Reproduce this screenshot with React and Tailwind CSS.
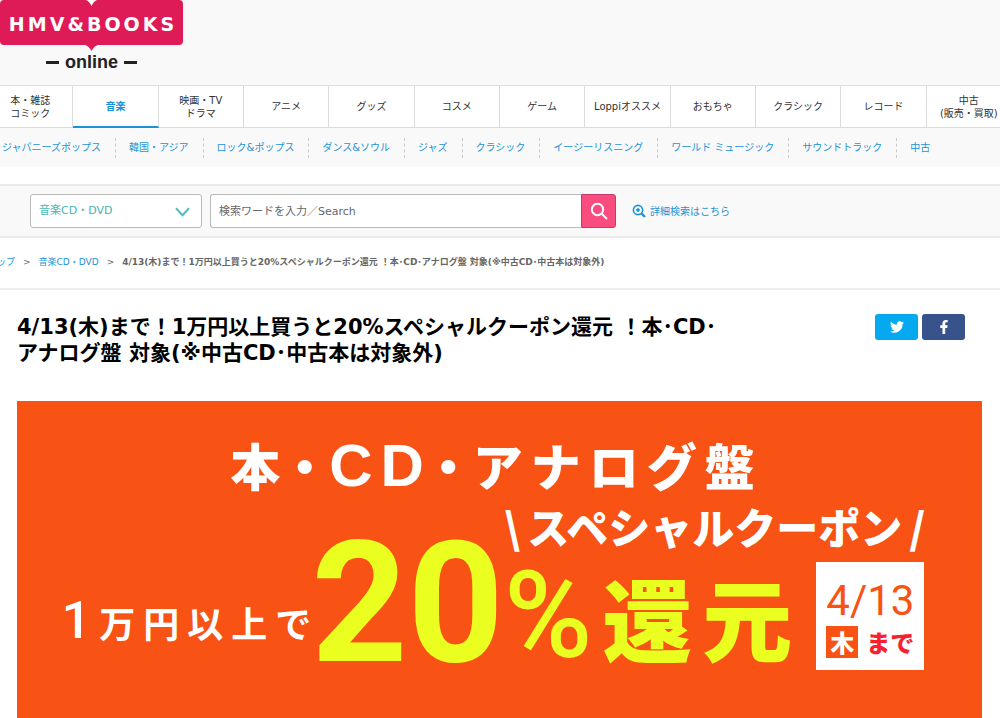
import { FaFacebookF, FaTwitter } from "react-icons/fa";

const categories = [
  ["本・雑誌", "コミック"],
  ["音楽"],
  ["映画・TV", "ドラマ"],
  ["アニメ"],
  ["グッズ"],
  ["コスメ"],
  ["ゲーム"],
  ["Loppiオススメ"],
  ["おもちゃ"],
  ["クラシック"],
  ["レコード"],
  ["中古", "(販売・買取)"],
];

const genres = [
  "ジャパニーズポップス",
  "韓国・アジア",
  "ロック&ポップス",
  "ダンス&ソウル",
  "ジャズ",
  "クラシック",
  "イージーリスニング",
  "ワールド ミュージック",
  "サウンドトラック",
  "中古",
];

const title = "4/13(木)まで！1万円以上買うと20%スペシャルクーポン還元 ！本･CD･アナログ盤 対象(※中古CD･中古本は対象外)";

// one span per character, so that the parent's gap sets them apart
function Letters({ text }) {
  return [...text].map((char, i) => <span key={i}>{char}</span>);
}

function Logo() {
  return (
    <a href="#" className="block w-[183px]" aria-label="HMV&BOOKS online">
      <div className="relative h-[51px]">
        <svg className="absolute inset-0" width="183" height="51" viewBox="0 0 183 51">
          <path
            d="M4 0H86Q89 1 91.500 6Q94 1 97 0H179Q183 0 183 4V41Q183 45 179 45H98Q94 46 91.500 51Q89 46 85 45H4Q0 45 0 41V4Q0 0 4 0Z"
            fill="#de1a57"
          />
        </svg>
        <div className="relative flex h-[48px] items-center justify-center gap-[3px] font-['DejaVu_Sans'] text-[19px] font-bold text-white">
          <Letters text="HMV&BOOKS" />
        </div>
      </div>
      <div className="flex items-center justify-center gap-[6px] font-['Liberation_Sans'] text-[18px] leading-[22px] font-bold text-[#222]">
        <span className="h-[3px] w-[13px] bg-[#222]"></span>
        online
        <span className="h-[3px] w-[13px] bg-[#222]"></span>
      </div>
    </a>
  );
}

function CategoryNav() {
  return (
    <nav className="-mx-3 grid grid-cols-12 border-t border-[#e0e0e0] bg-white">
      {categories.map((lines, i) => (
        <a
          key={lines[0]}
          href="#"
          className={`flex h-[42px] flex-col items-center justify-center border-r text-[10px] leading-[13px] whitespace-nowrap ${
            i === 1
              ? "border-b-2 border-r-[#e0e0e0] border-b-[#1a94d6] font-bold text-[#1a94d6]"
              : "border-b border-[#dcdcdc] text-[#333]"
          }`}
        >
          {lines.map((line) => (
            <span key={line}>{line}</span>
          ))}
        </a>
      ))}
    </nav>
  );
}

function GenreNav() {
  return (
    <nav className="flex h-[39px] items-center bg-[#f9f9f9] text-[10px] whitespace-nowrap text-[#1a94d6]">
      {genres.map((genre, i) => (
        <a
          key={genre}
          href="#"
          className={`pr-[14px] leading-[20px] ${i === 0 ? "pl-[2px]" : "border-l border-dashed border-[#ccc] pl-[13px]"}`}
        >
          {genre}
        </a>
      ))}
    </nav>
  );
}

function SearchBar() {
  return (
    <form className="mt-[17px] flex h-[54px] items-center border-y-2 border-[#eaeaea] bg-[#f9f9f9] pl-[30px]">
      <div className="relative">
        <select
          aria-label="カテゴリ"
          className="h-[34px] w-[172px] appearance-none rounded-[3px] border border-[#bbb] bg-white px-[8px] text-[11px] text-[#47b5b0]"
        >
          <option>音楽CD・DVD</option>
        </select>
        <svg
          className="pointer-events-none absolute top-[13px] right-3 h-[10px] w-[15px]"
          viewBox="0 0 15 10"
          fill="none"
          stroke="#4fbcc0"
          strokeWidth="2"
        >
          <path d="M1 1.200L7.500 8.200L14 1.200" />
        </svg>
      </div>
      <div className="ml-2 flex">
        <input
          type="text"
          aria-label="検索"
          placeholder="検索ワードを入力／Search"
          className="h-[34px] w-[371px] rounded-l-[3px] border border-r-0 border-[#bbb] bg-white px-[8px] text-[11px] placeholder:text-[#666]"
        />
        <button
          type="button"
          aria-label="検索する"
          className="flex h-[34px] w-[35px] items-center justify-center rounded-r-[3px] border border-[#c93a68] bg-[#f94d80] text-white"
        >
          <svg className="h-[18px] w-[18px]" viewBox="0 0 18 18" fill="none" stroke="currentColor" strokeWidth="2">
            <circle cx="7.500" cy="7.500" r="5.700" />
            <path d="M11.500 11.500L17 17" />
          </svg>
        </button>
      </div>
      <a href="#" className="ml-4 flex items-center gap-1 text-[10px] text-[#1a94d6]">
        <svg className="h-[14px] w-[14px]" viewBox="0 0 14 14" fill="none" stroke="currentColor">
          <circle cx="6" cy="6" r="4.600" strokeWidth="1.600" />
          <path d="M6 4v4M4 6h4" strokeWidth="1.500" />
          <path d="M9.500 9.500L13 13" strokeWidth="2.400" />
        </svg>
        詳細検索はこちら
      </a>
    </form>
  );
}

function Breadcrumb() {
  return (
    <div className="-ml-3 flex h-[52px] items-center gap-2 border-b-2 border-[#eee] text-[9px] whitespace-nowrap text-[#666]">
      <a href="#" className="text-[#1a94d6]">トップ</a>
      <span>&gt;</span>
      <a href="#" className="text-[#1a94d6]">音楽CD・DVD</a>
      <span>&gt;</span>
      <span className="font-bold">{title}</span>
    </div>
  );
}

function Banner() {
  return (
    <div className="flex-1 bg-[#f85215] pt-[27px] font-['Noto_Sans_CJK_JP',sans-serif] text-white">
      <div className="flex items-baseline justify-center gap-2 pr-[14px] text-[50px] leading-[72px] font-black">
        <span>本</span>
        <span className="px-1 [font-feature-settings:'halt']">・</span>
        <span className="font-['Liberation_Sans'] text-[60px] font-bold">C</span>
        <span className="font-['Liberation_Sans'] text-[60px] font-bold">D</span>
        <span className="px-1 [font-feature-settings:'halt']">・</span>
        <Letters text="アナログ盤" />
      </div>
      <div className="flex items-end justify-center pr-3">
        <div className="flex items-baseline gap-2 pb-[20px] text-[36px] leading-[56px] font-bold">
          <span className="font-['Roboto'] text-[52px] font-medium">1</span>
          <Letters text="万円以上で" />
        </div>
        <div className="font-['Roboto'] text-[168px] leading-[132px] font-bold text-[#eaff1f]">20</div>
        <div>
          <div className="mb-3 flex items-center gap-[7px] text-[42px] leading-[48px] font-black">
            <span>\</span>
            <span>スペシャルクーポン</span>
            <span>/</span>
          </div>
          <div className="flex items-center">
            <div className="flex items-center gap-[10px] text-[90px] leading-[108px] font-black text-[#eaff1f]">
              <span className="font-['Roboto'] text-[120px] font-medium">%</span>
              <Letters text="還元" />
            </div>
            <div className="ml-6 flex h-[108px] w-[108px] flex-col items-center bg-white pt-[14px]">
              <div className="font-['Roboto'] text-[42px] leading-[50px] text-[#f85215]">4/13</div>
              <div className="flex items-center gap-2 text-[24px] leading-[32px] font-black text-[#fa1f30]">
                <span className="w-[32px] bg-[#f85215] text-center text-white">木</span>
                <span>まで</span>
              </div>
            </div>
          </div>
        </div>
      </div>
    </div>
  );
}

export default function App() {
  return (
    <div className="flex min-h-screen flex-col overflow-x-hidden bg-white font-['DejaVu_Sans','Noto_Sans_CJK_JP',sans-serif]">
      <header>
        <div className="h-[85px] bg-[#f9f9f9]">
          <Logo />
        </div>
        <CategoryNav />
        <GenreNav />
        <SearchBar />
        <Breadcrumb />
      </header>
      <main className="flex flex-1 flex-col pr-[18px] pl-[17px]">
        <div className="flex items-start justify-between pt-6 pr-[17px]">
          <h1 className="max-w-[720px] text-[21px] leading-[26px] font-bold text-black">{title}</h1>
          <div className="flex gap-1">
            <a href="#" aria-label="Twitter" className="flex h-[26px] w-[43px] items-center justify-center rounded-[3px] bg-[#04a9f0] text-white">
              <FaTwitter className="h-[14px] w-[14px]" />
            </a>
            <a href="#" aria-label="Facebook" className="flex h-[26px] w-[43px] items-center justify-center rounded-[3px] bg-[#38528c] text-white">
              <FaFacebookF className="h-[14px] w-[14px]" />
            </a>
          </div>
        </div>
        <div className="mt-[35px] flex flex-1 flex-col">
          <Banner />
        </div>
      </main>
    </div>
  );
}
